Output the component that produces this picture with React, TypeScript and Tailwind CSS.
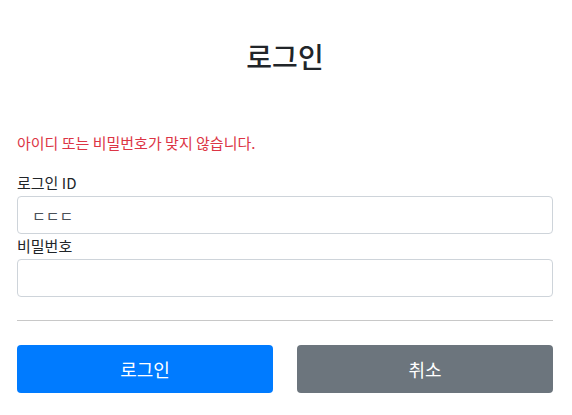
export default function App() {
  return (
    <div
      className="min-h-[415px] bg-white pl-[17px] pr-[19px] text-[15px] leading-6 text-[#212529]"
      style={{ fontFamily: '"Noto Sans CJK KR", "Noto Sans", sans-serif' }}
    >
      <div className="pt-[35px] pb-[54px] text-center">
        <h2 className="text-[28px] font-medium leading-[42px]">로그인</h2>
      </div>

      <form>
        <div className="mb-[16px] text-[#dc3545]">아이디 또는 비밀번호가 맞지 않습니다.</div>

        <div>
          <label className="block">로그인 ID</label>
          <input
            type="text"
            defaultValue="ㄷㄷㄷ"
            className="mt-px block h-[38px] w-full rounded border border-[#ced4da] px-[14px] text-[15px] text-[#495057] outline-none"
          />
        </div>
        <div>
          <label className="block">비밀번호</label>
          <input
            type="password"
            className="mt-px block h-[38px] w-full rounded border border-[#ced4da] px-3 outline-none"
          />
        </div>

        <hr className="mt-[23px] mb-[24px] border-t border-[#c8c8c8]" />

        <div className="grid grid-cols-2 gap-6">
          <button
            type="button"
            className="h-12 rounded bg-[#007bff] text-[18px] text-white"
          >
            로그인
          </button>
          <button
            type="button"
            className="h-12 rounded bg-[#6c757d] text-[18px] text-white"
          >
            취소
          </button>
        </div>
      </form>
    </div>
  );
}
